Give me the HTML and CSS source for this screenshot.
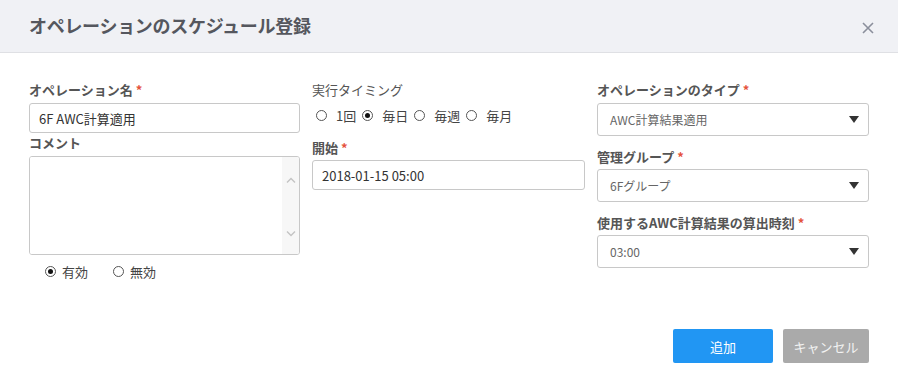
FILE: index.html
```html
<!DOCTYPE html>
<html lang="ja">
<head>
    <meta charset="UTF-8">
    <title>オペレーションのスケジュール登録</title>
    <link rel="stylesheet" href="styles.css">
</head>
<body>

<div class="modal">
    <!-- Header -->
    <div class="modal-header">
        <h1>オペレーションのスケジュール登録</h1>
        <button class="close-btn" aria-label="close">
            <svg width="12" height="12" viewBox="0 0 12 12"><path d="M1 1L11 11M11 1L1 11" stroke="#8b8f9c" stroke-width="1.6" fill="none"/></svg>
        </button>
    </div>

    <div class="modal-body">
        <!-- Column 1 -->
        <div class="col">
            <label class="field-label">オペレーション名<span class="req">*</span></label>
            <input type="text" class="text-input name-input" value="6F AWC計算適用">
            <label class="field-label comment-label">コメント</label>
            <div class="textarea-box">
                <textarea></textarea>
                <div class="fake-scroll">
                    <svg width="10" height="6" viewBox="0 0 10 6"><path d="M1 5.5L5 1.5L9 5.5" stroke="#c4c4c4" stroke-width="1.4" fill="none"/></svg>
                    <svg width="10" height="6" viewBox="0 0 10 6"><path d="M1 0.5L5 4.5L9 0.5" stroke="#c4c4c4" stroke-width="1.4" fill="none"/></svg>
                </div>
            </div>
            <div class="radio-row status-row">
                <span class="radio checked"></span><span class="radio-text">有効</span>
                <span class="radio gap-left"></span><span class="radio-text">無効</span>
            </div>
        </div>

        <!-- Column 2 -->
        <div class="col">
            <label class="field-label plain">実行タイミング</label>
            <div class="radio-row timing-row">
                <span class="radio"></span><span class="radio-text">1回</span>
                <span class="radio checked"></span><span class="radio-text">毎日</span>
                <span class="radio"></span><span class="radio-text">毎週</span>
                <span class="radio"></span><span class="radio-text">毎月</span>
            </div>
            <label class="field-label start-label">開始<span class="req">*</span></label>
            <input type="text" class="text-input start-input" value="2018-01-15 05:00">
        </div>

        <!-- Column 3 -->
        <div class="col">
            <label class="field-label">オペレーションのタイプ<span class="req">*</span></label>
            <div class="select-box">AWC計算結果適用<span class="caret"></span></div>
            <label class="field-label sel-label">管理グループ<span class="req">*</span></label>
            <div class="select-box">6Fグループ<span class="caret"></span></div>
            <label class="field-label sel-label">使用するAWC計算結果の算出時刻<span class="req">*</span></label>
            <div class="select-box">03:00<span class="caret"></span></div>
        </div>
    </div>

    <!-- Footer buttons -->
    <div class="modal-footer">
        <button class="add-btn">追加</button>
        <button class="cancel-btn">キャンセル</button>
    </div>
</div>

</body>
</html>
```

FILE: styles.css
```css
body {
    margin: 0;
    font-family: "Noto Sans CJK JP", "Noto Sans", sans-serif;
    background-color: #fff;
    color: #333;
}

.modal {
    width: 898px;
    height: 387px;
    background-color: #fff;
}

/* Header */
.modal-header {
    height: 52px;
    background-color: #f0f1f5;
    border-bottom: 1px solid #dfe0e4;
    display: flex;
    align-items: center;
    justify-content: space-between;
    padding: 0 24px 0 29px;
}

.modal-header h1 {
    margin: 0 0 2px 0;
    font-size: 18px;
    font-weight: bold;
    color: #55575e;
    letter-spacing: -0.3px;
}

.close-btn {
    border: none;
    background: none;
    padding: 0;
    margin-top: 4px;
    width: 12px;
    height: 12px;
    cursor: pointer;
}

/* Body */
.modal-body {
    box-sizing: border-box;
    display: grid;
    grid-template-columns: 271px 273px 272px;
    column-gap: 12px;
    padding: 28px 30px 0 29px;
    height: 241px;
}

.col {
    display: flex;
    flex-direction: column;
    align-items: flex-start;
}

.field-label {
    font-size: 13px;
    font-weight: bold;
    color: #555;
    line-height: 18px;
    white-space: nowrap;
}

.field-label.plain {
    font-weight: normal;
    color: #555;
}

.req {
    color: #e5533d;
    margin-left: 3px;
}

.text-input {
    box-sizing: border-box;
    width: 100%;
    height: 30px;
    border: 1px solid #c8c8c8;
    border-radius: 3px;
    padding: 0 9px;
    font-family: inherit;
    font-size: 13px;
    color: #333;
    outline: none;
}

.name-input {
    margin-top: 4px;
}

.comment-label {
    margin-top: 1px;
}

.textarea-box {
    box-sizing: border-box;
    width: 100%;
    height: 99px;
    margin-top: 4px;
    border: 1px solid #c8c8c8;
    border-radius: 3px;
    display: flex;
    overflow: hidden;
}

.textarea-box textarea {
    flex: 1;
    border: none;
    resize: none;
    outline: none;
    font-family: inherit;
}

.fake-scroll {
    width: 17px;
    background-color: #f7f7f7;
    display: flex;
    flex-direction: column;
    justify-content: space-between;
    align-items: center;
    padding: 20px 0 17px;
}

/* Radios */
.radio-row {
    display: flex;
    align-items: center;
    height: 18px;
    font-size: 13px;
    color: #444;
}

.status-row {
    margin-top: 7px;
    padding-left: 16px;
}

.timing-row {
    margin-top: 7px;
    padding-left: 4px;
}

.radio {
    box-sizing: border-box;
    width: 11px;
    height: 11px;
    border: 1px solid #555;
    border-radius: 50%;
    position: relative;
    flex-shrink: 0;
}

.radio.checked::after {
    content: "";
    position: absolute;
    left: 2px;
    top: 2px;
    width: 5px;
    height: 5px;
    border-radius: 50%;
    background-color: #111;
}

.radio-text {
    margin: 0 0 0 6px;
}

.gap-left {
    margin-left: 25px;
}

.timing-row .radio-text {
    margin: 0 6px 0 9px;
}

.start-label {
    margin-top: 15px;
}

.start-input {
    margin-top: 3px;
    height: 30px;
}

/* Selects */
.select-box {
    box-sizing: border-box;
    width: 100%;
    height: 33px;
    margin-top: 4px;
    border: 1px solid #c8c8c8;
    border-radius: 3px;
    padding: 0 9px 0 12px;
    display: flex;
    align-items: center;
    justify-content: space-between;
    font-size: 12px;
    color: #666;
}

.sel-label {
    margin-top: 12px;
}

.sel-label + .select-box {
    margin-top: 3px;
}

.caret {
    width: 0;
    height: 0;
    border-left: 5px solid transparent;
    border-right: 5px solid transparent;
    border-top: 7px solid #333;
}

/* Footer */
.modal-footer {
    display: flex;
    justify-content: flex-end;
    gap: 10px;
    padding: 35px 29px 0 0;
}

.add-btn, .cancel-btn {
    height: 34px;
    border: none;
    border-radius: 2px;
    color: white;
    font-family: inherit;
    font-size: 13px;
    cursor: pointer;
}

.add-btn {
    width: 100px;
    background-color: #2196f3;
}

.cancel-btn {
    width: 86px;
    background-color: #aaaaaa;
    color: #f2f2f2;
}
```
